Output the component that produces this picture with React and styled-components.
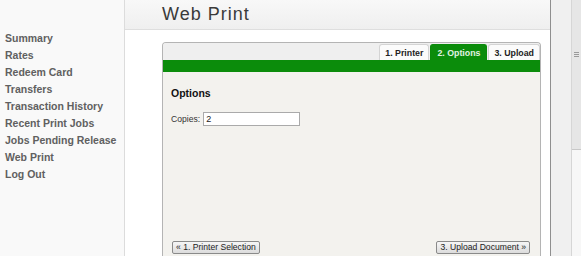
import React from 'react';
import styled, { createGlobalStyle } from 'styled-components';

const GlobalStyle = createGlobalStyle`
  html, body {
    margin: 0;
    padding: 0;
    overflow: hidden;
    background: #ffffff;
    font-family: "Liberation Sans", Arial, sans-serif;
  }
`;

const Page = styled.div`
  display: flex;
  height: 256px;
  width: 581px;
  overflow: hidden;
`;

const Sidebar = styled.nav`
  width: 125px;
  flex-shrink: 0;
  background: #f9f9f9;
  border-right: 1px solid #dcdcdc;
  padding-top: 30px;
  box-sizing: border-box;
  display: flex;
  flex-direction: column;
`;

const NavLink = styled.a`
  display: block;
  padding-left: 5px;
  height: 17px;
  line-height: 17px;
  font-size: 10.5px;
  font-weight: bold;
  color: #606060;
  text-decoration: none;
  cursor: pointer;
`;

const Main = styled.main`
  width: 425px;
  flex-shrink: 0;
  display: flex;
  flex-direction: column;
  background: #fff;
`;

const Header = styled.header`
  flex-shrink: 0;
  height: 29px;
  border-bottom: 1px solid #dedede;
  background: linear-gradient(#f8f8f8, #efefef);
  padding-left: 37px;
  display: flex;
  align-items: center;
`;

const Title = styled.h1`
  margin: 0;
  font-size: 18px;
  letter-spacing: 1px;
  font-weight: normal;
  color: #3a3a3a;
`;

const Content = styled.div`
  padding: 12px 9px 0 37px;
`;

const Panel = styled.section`
  border: 1px solid #b4b4b4;
  border-bottom: none;
  border-radius: 4px 4px 0 0;
  overflow: hidden;
  background: #f3f2ee;
`;

const TabBar = styled.div`
  height: 17px;
  background: #efefef;
  display: flex;
  justify-content: flex-end;
  align-items: flex-end;
`;

const Tab = styled.div`
  height: 16px;
  box-sizing: border-box;
  padding: 0 ${p => (p.$active ? 6 : 5)}px;
  margin-left: 1px;
  border: 1px solid ${p => (p.$active ? '#0a8a0a' : '#d4d4d4')};
  border-bottom: none;
  border-radius: 3px 3px 0 0;
  background: ${p => (p.$active ? '#0b8c0b' : '#fbfbfb')};
  color: ${p => (p.$active ? '#e2f3e2' : '#222')};
  font-size: 8.8px;
  font-weight: bold;
  line-height: 16px;
`;

const GreenBar = styled.div`
  height: 12px;
  background: #0b8c0b;
`;

const Body = styled.div`
  padding: 15px 10px 30px 8px;
  display: flex;
  flex-direction: column;
`;

const Heading = styled.h2`
  margin: 0 0 12px;
  height: 13px;
  line-height: 13px;
  font-size: 10.5px;
  font-weight: bold;
  color: #111;
`;

const Field = styled.label`
  display: flex;
  align-items: center;
  gap: 3px;
  font-size: 8.6px;
  color: #333;
`;

const Input = styled.input`
  width: 97px;
  height: 14px;
  box-sizing: border-box;
  border: 1px solid #aaaaaa;
  padding: 0 2px;
  font-family: inherit;
  font-size: 9px;
  color: #222;
  background: #fff;
  outline: none;
`;

const Actions = styled.div`
  margin-top: 115px;
  display: flex;
  justify-content: space-between;
`;

const Button = styled.button`
  height: 13px;
  box-sizing: border-box;
  padding: 0 3px;
  margin-left: 1px;
  border: 1px solid #8a8a8a;
  border-radius: 2px;
  background: linear-gradient(#f6f6f6, #dcdcdc);
  font-family: inherit;
  font-size: 8.6px;
  line-height: 11px;
  color: #222;
  cursor: pointer;
`;

const Gutter = styled.div`
  width: 21px;
  flex-shrink: 0;
  border-left: 1px solid #8f8f8f;
  background: #f0f0f0;
  box-sizing: border-box;
`;

const ScrollTrack = styled.div`
  width: 10px;
  flex-shrink: 0;
  border-left: 1px solid #d6d6d6;
  background: #f7f7f7;
  box-sizing: border-box;
  display: flex;
  flex-direction: column;
`;

const Thumb = styled.div`
  height: 150px;
  background: #e6e6e6;
  border-bottom: 1px solid #c8c8c8;
  display: flex;
  justify-content: center;
  padding-top: 52px;
  box-sizing: border-box;
`;

const Grip = styled.div`
  width: 5px;
  height: 6px;
  background: repeating-linear-gradient(#9a9a9a 0 1px, transparent 1px 2px);
`;

const navItems = [
  'Summary',
  'Rates',
  'Redeem Card',
  'Transfers',
  'Transaction History',
  'Recent Print Jobs',
  'Jobs Pending Release',
  'Web Print',
  'Log Out',
];

const tabs = [
  { label: '1. Printer' },
  { label: '2. Options', active: true },
  { label: '3. Upload' },
];

const App = () => {
  return (
    <>
      <GlobalStyle />
      <Page>
        <Sidebar>
          {navItems.map(item => (
            <NavLink key={item}>{item}</NavLink>
          ))}
        </Sidebar>
        <Main>
          <Header>
            <Title>Web Print</Title>
          </Header>
          <Content>
            <Panel>
              <TabBar>
                {tabs.map(t => (
                  <Tab key={t.label} $active={t.active}>
                    {t.label}
                  </Tab>
                ))}
              </TabBar>
              <GreenBar />
              <Body>
                <Heading>Options</Heading>
                <Field>
                  Copies:
                  <Input defaultValue="2" />
                </Field>
                <Actions>
                  <Button>« 1. Printer Selection</Button>
                  <Button>3. Upload Document »</Button>
                </Actions>
              </Body>
            </Panel>
          </Content>
        </Main>
        <Gutter />
        <ScrollTrack>
          <Thumb>
            <Grip />
          </Thumb>
        </ScrollTrack>
      </Page>
    </>
  );
};

export default App;
